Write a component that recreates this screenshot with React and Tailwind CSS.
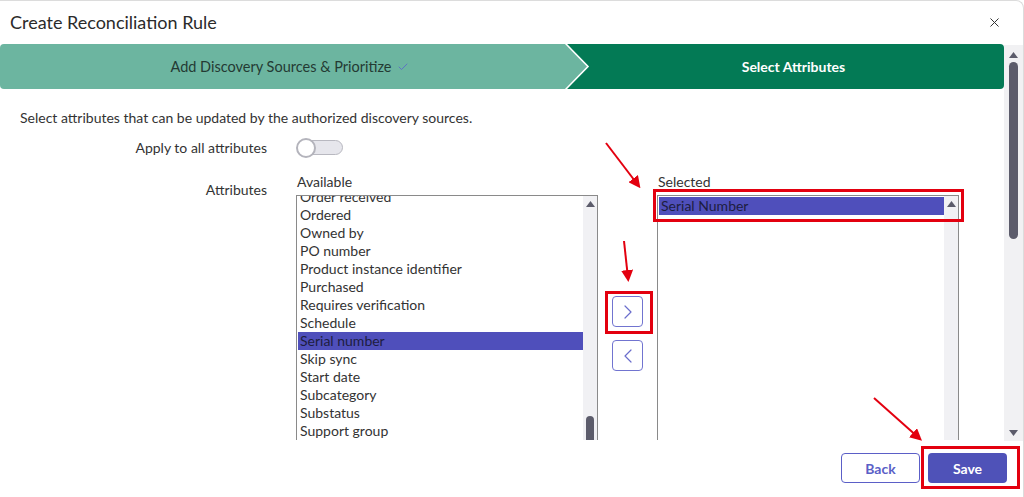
import { X, Check } from 'lucide-react'

const availableItems = [
  'Order received',
  'Ordered',
  'Owned by',
  'PO number',
  'Product instance identifier',
  'Purchased',
  'Requires verification',
  'Schedule',
  'Serial number',
  'Skip sync',
  'Start date',
  'Subcategory',
  'Substatus',
  'Support group',
]

const Triangle = ({ down = false }) => (
  <svg width="9" height="6" viewBox="0 0 9 6" className="block">
    <polygon points={down ? '0,0 9,0 4.5,6' : '0,6 9,6 4.5,0'} fill="#5c5c6b" />
  </svg>
)

const Chevron = ({ left = false }) => (
  <svg width="8" height="14" viewBox="0 0 8 14">
    <polyline
      points={left ? '7,1 1,7 7,13' : '1,1 7,7 1,13'}
      fill="none"
      stroke="#6a6dcc"
      strokeWidth="1.2"
      strokeLinecap="round"
      strokeLinejoin="round"
    />
  </svg>
)

const ListBox = ({ items, selected, offset = 0, thumb = false }) => (
  <div className="flex h-[245px] w-[302px] border-x border-t border-[#8a8a8a] bg-white">
    <div className="flex-1 overflow-hidden pt-px pl-px">
      <div style={{ marginTop: -offset }}>
        {items.map((item) => (
          <div
            key={item}
            className={`h-[18px] pl-[2px] text-[14px] leading-[18px] whitespace-nowrap ${
              item === selected ? 'bg-[#4f4fbb] text-[#1d1d3f]' : 'text-[#333]'
            }`}
          >
            {item}
          </div>
        ))}
      </div>
    </div>
    <div className="flex w-[14px] flex-col items-center justify-between bg-[#f1f1f4] pt-[5px]">
      <Triangle />
      {thumb && <div className="h-[24px] w-[8px] rounded-t-full bg-[#5c5c6b]" />}
    </div>
  </div>
)

const App = () => {
  return (
    <div className="relative h-[497px] w-[1024px] overflow-hidden rounded-tr-[8px] border-t border-r border-[#dcdcdc] bg-white font-['Lato','Liberation_Sans',sans-serif] text-[#333]">
      {/* Header */}
      <div className="flex h-[43px] items-center justify-between pl-[10px] pr-[21px]">
        <h1 className="text-[18px] text-[#2b2b2b]">Create Reconciliation Rule</h1>
        <X className="h-[15px] w-[15px] text-[#333]" strokeWidth={1.6} />
      </div>

      <div className="flex h-[397px]">
        <div className="flex flex-1 flex-col overflow-hidden">
          {/* Stepper */}
          <div className="relative flex h-[45px] text-[14px]">
            <div className="flex w-[565px] items-center justify-center rounded-l-[4px] bg-[#6cb5a0] pl-[14px] text-[14.5px] text-[#243a33]">
              Add Discovery Sources &amp; Prioritize
              <Check className="ml-[5px] h-[12px] w-[12px] text-[#5a6cc8]" strokeWidth={1.8} />
            </div>
            <div className="flex flex-1 items-center justify-center rounded-r-[4px] bg-[#037a55] pl-[18px] font-bold text-white">
              Select Attributes
            </div>
            <svg className="absolute top-0 left-[555px]" width="40" height="45" viewBox="0 0 40 45">
              <polygon points="0,0 10,0 33,22.5 10,45 0,45" fill="#6cb5a0" />
              <polyline points="10,-1 33,22.5 10,46" fill="none" stroke="#ffffff" strokeWidth="1.6" />
            </svg>
          </div>

          {/* Content */}
          <div className="pt-[20px] pl-[20px] text-[14px]">
            <p className="leading-[17px]">Select attributes that can be updated by the authorized discovery sources.</p>

            <div className="mt-[11px] flex items-center">
              <div className="w-[247px] text-right">Apply to all attributes</div>
              <div className="ml-[30px] flex h-[20px] w-[48px] items-center">
                <div className="relative flex h-[15px] w-[46px] items-center rounded-full border border-[#b8b8c0] bg-[#e6e6ec]">
                  <div className="absolute left-[-2px] h-[20px] w-[20px] rounded-full border-2 border-[#b4b4bc] bg-white" />
                </div>
              </div>
            </div>

            <div className="mt-[17px] flex">
              <div className="w-[247px] pt-[4px] text-right">Attributes</div>
              <div className="ml-[29px] flex">
                <div>
                  <div className="h-[20px] pl-[1px] leading-[14px]">Available</div>
                  <ListBox items={availableItems} selected="Serial number" offset={9} thumb />
                </div>
                <div className="ml-[14px] flex flex-col gap-[13px] pt-[121px]">
                  <button className="flex h-[31px] w-[31px] items-center justify-center rounded-[4px] border border-[#7174d0]">
                    <Chevron />
                  </button>
                  <button className="flex h-[31px] w-[31px] items-center justify-center rounded-[4px] border border-[#7174d0]">
                    <Chevron left />
                  </button>
                </div>
                <div className="ml-[14px]">
                  <div className="h-[20px] pl-[1px] leading-[14px]">Selected</div>
                  <ListBox items={['Serial Number']} selected="Serial Number" />
                </div>
              </div>
            </div>
          </div>
        </div>

        {/* Page scrollbar */}
        <div className="mt-px flex w-[19px] flex-col items-center justify-between bg-[#f1f1f3] pt-[7px] pb-[5px]">
          <div className="flex flex-col items-center gap-[4px]">
            <Triangle />
            <div className="h-[177px] w-[9px] rounded-full bg-[#5c5c6b]" />
          </div>
          <Triangle down />
        </div>
      </div>

      {/* Footer */}
      <div className="flex justify-end gap-[8px] pt-[12px] pr-[16px]">
        <button className="h-[30px] w-[79px] rounded-[4px] border border-[#5b5fc7] text-[14px] font-bold text-[#5b5fc7]">
          Back
        </button>
        <button className="h-[30px] w-[79px] rounded-[4px] bg-[#4f52b8] text-[14px] font-bold text-white">
          Save
        </button>
      </div>

      {/* Annotations */}
      <div className="absolute top-[290px] left-[605px] h-[43px] w-[48px] border-[3px] border-[#e3000f]" />
      <div className="absolute top-[188px] left-[653px] h-[33px] w-[311px] border-[3px] border-[#e3000f]" />
      <div className="absolute top-[445px] left-[921px] h-[43px] w-[99px] border-[3px] border-[#e3000f]" />
      <svg className="pointer-events-none absolute inset-0" width="1024" height="497">
        <defs>
          <marker id="head" markerWidth="6" markerHeight="6" refX="4" refY="3" orient="auto">
            <polygon points="0,0 6,3 0,6" fill="#e3000f" />
          </marker>
        </defs>
        <line x1="606" y1="142" x2="638" y2="184" stroke="#e3000f" strokeWidth="2" markerEnd="url(#head)" />
        <line x1="624" y1="240" x2="628" y2="277" stroke="#e3000f" strokeWidth="2" markerEnd="url(#head)" />
        <line x1="874" y1="397" x2="919" y2="437" stroke="#e3000f" strokeWidth="2" markerEnd="url(#head)" />
      </svg>
    </div>
  )
}

export default App
